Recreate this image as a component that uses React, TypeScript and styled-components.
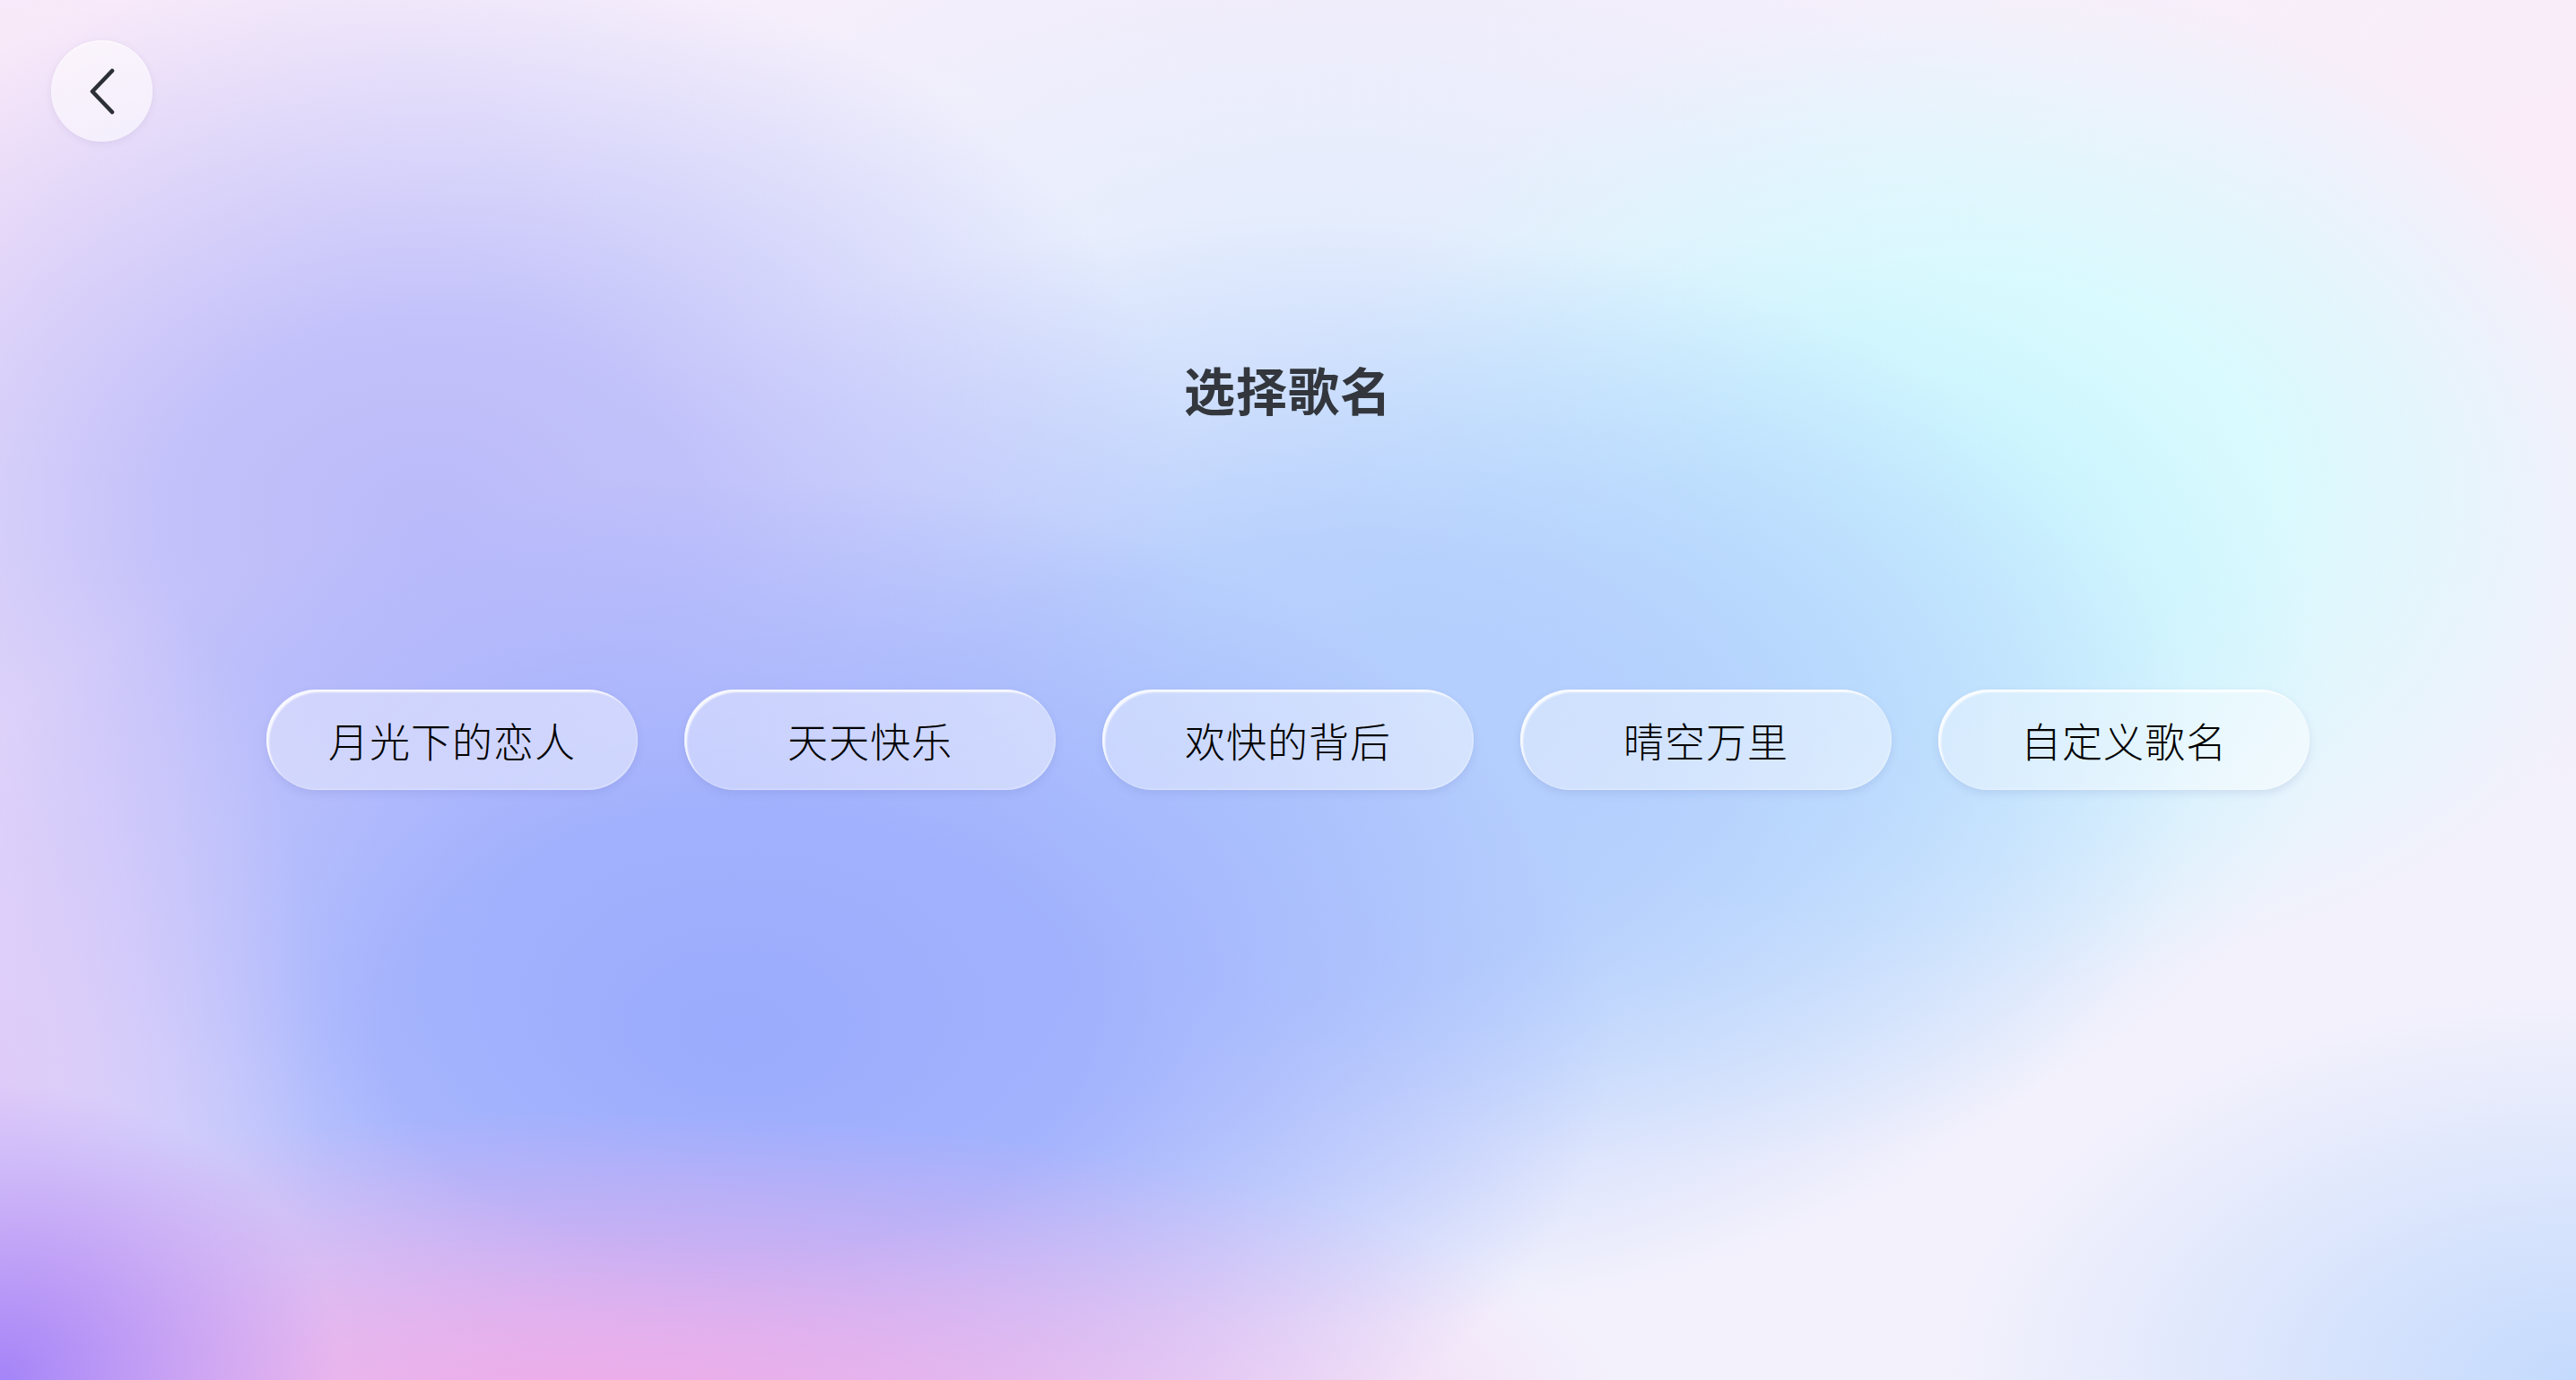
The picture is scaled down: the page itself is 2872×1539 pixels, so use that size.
import React from 'react';
import styled, { createGlobalStyle } from 'styled-components';

const GlobalStyle = createGlobalStyle`
  html, body {
    margin: 0;
    padding: 0;
  }
  body {
    font-family: "Noto Sans CJK SC", "Noto Sans", sans-serif;
    color: #111;
  }
`;

// soft mesh-like backdrop built from stacked radial gradients (top layer first)
const Page = styled.div`
  min-height: 100vh;
  overflow: hidden;
  display: flex;
  flex-direction: column;
  background-color: #f3f1fc;
  background-image:
    radial-gradient(ellipse 380px 330px at 0px 1539px, rgba(164, 132, 248, 1), rgba(164, 132, 248, 0) 100%),
    radial-gradient(ellipse 1150px 340px at 660px 1580px, rgba(240, 170, 232, 1) 0%, rgba(240, 170, 232, 0.7) 35%, rgba(240, 170, 232, 0) 100%),
    radial-gradient(ellipse 360px 620px at 0px 1200px, rgba(222, 200, 248, 0.9), rgba(222, 200, 248, 0) 100%),
    radial-gradient(ellipse 700px 430px at 2872px 1539px, rgba(196, 218, 253, 1), rgba(196, 218, 253, 0) 100%),
    radial-gradient(ellipse 980px 620px at 820px 1150px, rgba(154, 171, 253, 1) 0%, rgba(158, 174, 253, 0.9) 40%, rgba(158, 174, 253, 0) 100%),
    radial-gradient(ellipse 850px 640px at 480px 580px, rgba(186, 186, 250, 1) 0%, rgba(186, 186, 250, 0.85) 35%, rgba(186, 186, 250, 0) 100%),
    radial-gradient(ellipse 1000px 620px at 1450px 860px, rgba(178, 204, 253, 1) 0%, rgba(178, 204, 253, 0.85) 40%, rgba(178, 204, 253, 0) 100%),
    radial-gradient(ellipse 700px 520px at 1900px 780px, rgba(190, 230, 254, 1) 0%, rgba(190, 230, 254, 0.7) 40%, rgba(190, 230, 254, 0) 100%),
    radial-gradient(ellipse 760px 560px at 2230px 540px, rgba(210, 252, 254, 1) 0%, rgba(210, 252, 254, 0.8) 40%, rgba(210, 252, 254, 0) 100%),
    radial-gradient(ellipse 900px 600px at 1500px 350px, rgba(226, 236, 253, 1), rgba(226, 236, 253, 0) 100%),
    radial-gradient(ellipse 700px 900px at 0px 300px, rgba(250, 230, 248, 1), rgba(250, 230, 248, 0) 100%),
    radial-gradient(ellipse 1600px 260px at 1436px 0px, rgba(251, 238, 250, 1), rgba(251, 238, 250, 0) 100%),
    radial-gradient(ellipse 700px 700px at 2872px 200px, rgba(251, 236, 249, 1), rgba(251, 236, 249, 0) 100%);
`;

const TopBar = styled.div`
  display: flex;
  padding: 45px 0 0 57px;
`;

const BackButton = styled.button`
  width: 113px;
  height: 113px;
  border-radius: 50%;
  border: none;
  padding: 0;
  display: flex;
  align-items: center;
  justify-content: center;
  background: rgba(255, 255, 255, 0.55);
  box-shadow: 0 2px 8px rgba(120, 100, 160, 0.12), inset 0 1px 2px rgba(255, 255, 255, 0.8);
  cursor: pointer;
`;

const Title = styled.h1`
  margin: 242px 0 0;
  text-align: center;
  font-size: 57px;
  line-height: 67px;
  font-weight: 700;
  color: #33373d;
  letter-spacing: 1px;
`;

const Options = styled.div`
  display: flex;
  justify-content: center;
  gap: 52px;
  margin-top: 302px;
`;

const Option = styled.button`
  width: 414px;
  height: 112px;
  border-radius: 56px;
  border: none;
  padding: 0;
  font-family: inherit;
  font-size: 45px;
  font-weight: 300;
  color: #000;
  letter-spacing: 1px;
  background: linear-gradient(135deg, rgba(255, 255, 255, 0.36), rgba(255, 255, 255, 0.46));
  box-shadow:
    inset 3px 3px 2px rgba(255, 255, 255, 0.85),
    inset -1px -1px 2px rgba(255, 255, 255, 0.35),
    0 4px 10px rgba(90, 100, 170, 0.14);
  cursor: pointer;
`;

const songs = ['月光下的恋人', '天天快乐', '欢快的背后', '晴空万里', '自定义歌名'];

export default function App() {
  return (
    <>
      <GlobalStyle />
      <Page>
        <TopBar>
          <BackButton aria-label="返回">
            <svg width="30" height="52" viewBox="0 0 30 52" fill="none">
              <path d="M26 3 L4 26 L26 49" stroke="#2c3036" strokeWidth="4.6" strokeLinecap="round" strokeLinejoin="round" />
            </svg>
          </BackButton>
        </TopBar>
        <Title>选择歌名</Title>
        <Options>
          {songs.map((name) => (
            <Option key={name}>{name}</Option>
          ))}
        </Options>
      </Page>
    </>
  );
}
